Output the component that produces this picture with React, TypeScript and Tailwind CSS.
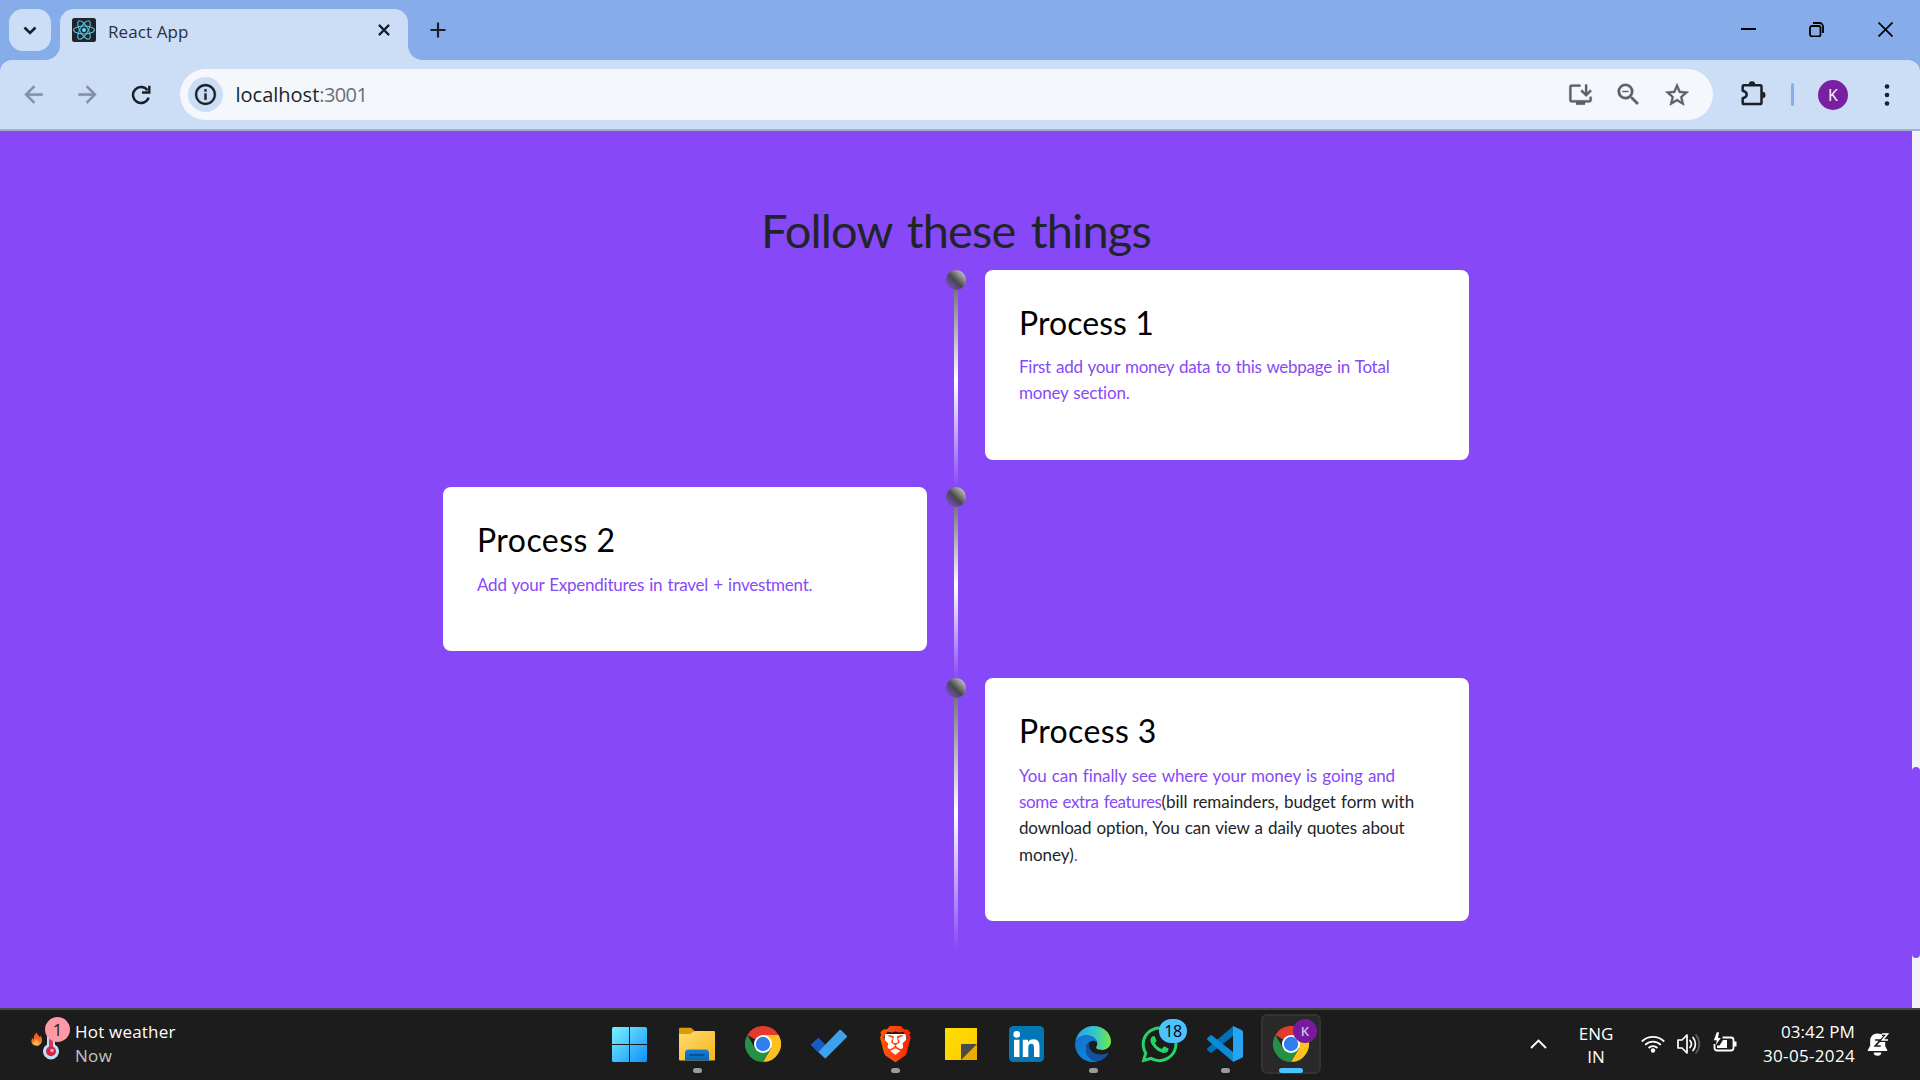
import React from 'react';
import {
  MdArrowBack,
  MdArrowForward,
  MdOutlineInfo,
  MdOutlineInstallDesktop,
  MdZoomOut,
  MdStarOutline,
} from 'react-icons/md';
import { SiBrave } from 'react-icons/si';
import { FaWhatsapp } from 'react-icons/fa';

function ReactFavicon() {
  return (
    <svg className="size-6" viewBox="0 0 24 24">
      <rect width="24" height="24" rx="2.5" fill="#20232a" />
      <g fill="none" stroke="#53c1de" strokeWidth="1.1">
        <ellipse cx="12" cy="12" rx="10.4" ry="4" />
        <ellipse cx="12" cy="12" rx="10.4" ry="4" transform="rotate(60 12 12)" />
        <ellipse cx="12" cy="12" rx="10.4" ry="4" transform="rotate(120 12 12)" />
      </g>
      <circle cx="12" cy="12" r="2" fill="#61dafb" />
    </svg>
  );
}

function TabFoot({ className }: { className: string }) {
  return (
    <svg className={className} viewBox="0 0 15 15">
      <path d="M15 0v15H0C8.500 15 15 8.500 15 0z" fill="#ccddf6" />
    </svg>
  );
}

function TabStrip() {
  return (
    <div className="flex h-[60px] items-start bg-[#86ade9]">
      <div className="mt-[9px] ml-[9px] flex size-[42px] items-center justify-center rounded-[14px] bg-[#ccddf6]">
        <svg className="size-[42px]" viewBox="0 0 42 42">
          <path d="M15.500 18.500l5.500 5.500 5.500-5.500" fill="none" stroke="#1b1f26" strokeWidth="2.600" />
        </svg>
      </div>
      <div className="relative mt-[9px] ml-[9px] flex h-[51px] w-[348px] rounded-t-[14px] bg-[#ccddf6] pl-3">
        <TabFoot className="absolute bottom-0 -left-[15px] size-[15px]" />
        <TabFoot className="absolute -right-[15px] bottom-0 size-[15px] -scale-x-100" />
        <div className="mt-[9px] size-6">
          <ReactFavicon />
        </div>
        <div className="mt-[11px] ml-3 flex-1 text-[17px] leading-6 tracking-[0.1px] text-[#2b3039]">React App</div>
        <svg className="mt-[15px] mr-[18px] size-3" viewBox="0 0 12 12">
          <path d="M.9.9l10.200 10.200M11.100.9L.9 11.100" stroke="#1b1f26" strokeWidth="2.200" />
        </svg>
      </div>
      <svg className="mt-[22px] ml-[22px] size-4" viewBox="0 0 16 16">
        <path d="M8 .5v15M.5 8h15" stroke="#1b1f26" strokeWidth="2.200" />
      </svg>
      <div className="mt-[22px] mr-[27px] ml-auto flex">
        <svg className="size-[15px]" viewBox="0 0 15 15">
          <path d="M0 7h15" stroke="#000" strokeWidth="2" />
        </svg>
        <svg className="ml-[53px] size-[15px]" viewBox="0 0 15 15">
          <rect x="1" y="4" width="10.500" height="10.500" rx="2" fill="none" stroke="#000" strokeWidth="1.800" />
          <path d="M4 1h6.500A3.500 3.500 0 0 1 14 4.500V11" fill="none" stroke="#000" strokeWidth="1.800" />
        </svg>
        <svg className="ml-[54px] size-[15px]" viewBox="0 0 15 15">
          <path d="M.5.5l14 14M14.500.5l-14 14" stroke="#000" strokeWidth="1.700" />
        </svg>
      </div>
    </div>
  );
}

function Toolbar() {
  return (
    <div className="bg-[#86ade9]">
      <div className="flex h-[71px] items-center rounded-t-[12px] border-b-2 border-[#a4b0cc] bg-[#ccddf6] [&_path[fill=none]]:stroke-[var(--line,none)]">
        <MdArrowBack className="mb-px ml-5 size-[27px] stroke-current stroke-[0.4] text-[#8390a5]" />
        <MdArrowForward className="mb-px ml-[27px] size-[27px] stroke-current stroke-[0.4] text-[#8390a5]" />
        <svg className="ml-[30px] size-5 [--line:#1b1f26]" viewBox="0 0 20 20">
          <path d="M16.500 5.200A8 8 0 1 0 17.600 12.600" fill="none" strokeWidth="2.500" />
          <path d="M18.300.8v6.700h-7.300" fill="none" strokeWidth="2.400" />
        </svg>
        <div className="ml-[29px] flex h-[51px] w-[1533px] items-center rounded-full bg-[#f4f8fd] pl-2">
          <div className="flex size-[35px] items-center justify-center rounded-full bg-[#ccddf6]">
            <MdOutlineInfo className="size-[25px] stroke-current stroke-[0.3] text-[#1b1f26]" />
          </div>
          <div className="ml-[12.5px] flex-1 text-[20px] leading-7 text-[#1b1f26]">
            <span>localhost</span>
            <span className="tracking-[-0.6px] text-[#6a6f77]">:3001</span>
          </div>
          <MdOutlineInstallDesktop className="mr-[20px] size-[27px] stroke-current stroke-[0.2] text-[#5c6066]" />
          <MdZoomOut className="mr-5 size-[29px] stroke-current stroke-[0.3] text-[#5c6066]" />
          <MdStarOutline className="mr-[22px] size-7 stroke-current stroke-[0.4] text-[#5c6066]" />
        </div>
        <svg className="mb-1 ml-[26px] size-[27px] [--line:#1b1f26]" viewBox="0 0 27 27">
          <path
            d="M5 6.300h16.200q1.300 0 1.300 1.300v16.200q0 1.300-1.300 1.300H5q-1.300 0-1.300-1.300v-4.500c3-.8 4-2.200 4-3.800s-1-3-4-3.800V7.600q0-1.300 1.300-1.300z"
            fill="none"
            strokeWidth="2.500"
            strokeLinejoin="round"
          />
          <path d="M9.800 5.500a3.200 3.200 0 0 1 6.400 0zM23.300 12.800a3.200 3.200 0 0 1 0 6.400z" fill="#1b1f26" />
        </svg>
        <div className="ml-[25px] h-[23px] w-[3px] rounded-full bg-[#86ade9]" />
        <div className="mt-px ml-6 flex size-[30px] items-center justify-center rounded-full bg-[#7b1fa2] text-[16px] leading-none text-white">
          K
        </div>
        <svg className="ml-9 h-6 w-[6px]" viewBox="0 0 6 24">
          <circle cx="3" cy="3.500" r="2.300" fill="#1b1f26" />
          <circle cx="3" cy="12" r="2.300" fill="#1b1f26" />
          <circle cx="3" cy="20.500" r="2.300" fill="#1b1f26" />
        </svg>
      </div>
    </div>
  );
}

function Marker() {
  return (
    <div className="flex flex-col items-center self-stretch">
      <div className="size-5 rounded-full bg-[linear-gradient(45deg,#8050e4_5%,#484848_47%,#c4c4c4_88%)]" />
      <div className="w-1 flex-1 bg-[linear-gradient(to_bottom,#787878,#ffffff_46%,#8749f700)]" />
    </div>
  );
}

function Card({ title, titleClass, className, children }: {
  title: string;
  titleClass: string;
  className: string;
  children: React.ReactNode;
}) {
  return (
    <div className={`w-[484px] rounded-[8px] bg-white pt-[34px] pl-[34px] ${className}`}>
      <h2 className={`text-[32px] leading-[38px] text-black ${titleClass}`}>{title}</h2>
      <div className="text-[17px] leading-[26.3px] whitespace-nowrap text-[#8749f7] [word-spacing:1px]">
        {children}
      </div>
    </div>
  );
}

function Page() {
  return (
    <div className="flex h-[877px] bg-[#8749f7] font-[Lato,sans-serif]">
      <main className="flex flex-1 flex-col items-center">
        <h1 className="mt-[71px] h-14 text-[47px] leading-[56px] tracking-[-0.86px] text-[#212529] [word-spacing:4px]">
          Follow these things
        </h1>
        <div className="mt-3 w-[1026px]">
          <div className="grid h-[217px] grid-cols-[484px_58px_484px] items-start">
            <div />
            <Marker />
            <Card title="Process 1" titleClass="mb-3 tracking-[0.05px]" className="h-[190px]">
              <p className="tracking-[-0.26px]">First add your money data to this webpage in Total</p>
              <p className="tracking-[-0.2px]">money section.</p>
            </Card>
          </div>
          <div className="grid h-[191px] grid-cols-[484px_58px_484px] items-start">
            <Card title="Process 2" titleClass="mb-[12.8px] tracking-[0.45px]" className="h-[164px]">
              <p className="tracking-[-0.22px]">Add your Expenditures in travel + investment.</p>
            </Card>
            <Marker />
          </div>
          <div className="grid h-[270px] grid-cols-[484px_58px_484px] items-start">
            <div />
            <Marker />
            <Card title="Process 3" titleClass="mb-[12.8px] tracking-[0.35px]" className="h-[243px]">
              <p className="tracking-[-0.1px]">You can finally see where your money is going and</p>
              <p>
                <span className="tracking-[-0.36px]">some extra features</span>
                <span className="tracking-[-0.06px] text-[#212529]">(bill remainders, budget form with</span>
              </p>
              <p className="tracking-[-0.15px] text-[#212529]">download option, You can view a daily quotes about</p>
              <p>
                <span className="text-[#212529]">money)</span>.
              </p>
            </Card>
          </div>
        </div>
      </main>
      <div className="w-2 bg-[#f1f3f8] pt-[636px]">
        <div className="h-[191px] rounded-full bg-[#8749f7]" />
      </div>
    </div>
  );
}

function ChromeLogo() {
  return (
    <svg className="size-9" viewBox="0 0 36 36">
      <path d="M18 18L2.400 9A18 18 0 0 1 33.600 9z" fill="#e33b2e" />
      <path d="M18 9h15.600A18 18 0 0 1 18 36l7.800-13.500z" fill="#fcc021" />
      <path d="M2.400 9A18 18 0 0 0 18 36l7.800-13.500L18 18l-7.800 4.500z" fill="#249144" />
      <circle cx="18" cy="18" r="9" fill="#fff" />
      <circle cx="18" cy="18" r="7.200" fill="#2f7def" />
    </svg>
  );
}

function WindowsLogo() {
  return (
    <svg className="size-[35px]" viewBox="0 0 35 35">
      <defs>
        <linearGradient id="win" x1="0" y1="0" x2="35" y2="35" gradientUnits="userSpaceOnUse">
          <stop stopColor="#7cf2fd" />
          <stop offset="1" stopColor="#0d90fa" />
        </linearGradient>
      </defs>
      <path
        d="M1.500 0H17v17H0V1.500Q0 0 1.500 0zM18 0h15.500Q35 0 35 1.500V17H18zM0 18h17v17H1.500Q0 35 0 33.500zM18 18h17v15.500q0 1.500-1.500 1.500H18z"
        fill="url(#win)"
      />
    </svg>
  );
}

function FolderIcon() {
  return (
    <svg className="size-9" viewBox="0 0 36 36">
      <defs>
        <linearGradient id="fold" x1="0" y1="0" x2="1" y2="1">
          <stop stopColor="#ffdb70" />
          <stop offset="1" stopColor="#f8b61c" />
        </linearGradient>
        <linearGradient id="foldBlue" x1="0" y1="0" x2="0" y2="1">
          <stop stopColor="#1283d6" />
          <stop offset="1" stopColor="#0864b4" />
        </linearGradient>
      </defs>
      <path d="M0 3q0-1.300 1.300-1.300H12l3.500 3.200L12 10H0z" fill="#dd9c05" />
      <path d="M0 8h11l4.500-3H35q1 0 1 1v27.500q0 1-1 1H1q-1 0-1-1z" fill="url(#fold)" />
      <path d="M6 34.500V27q0-3.500 3.500-3.500h17Q30 23.500 30 27v7.500z" fill="url(#foldBlue)" />
      <path d="M11 28.800h14" stroke="#0a4c8c" strokeWidth="1.800" strokeLinecap="round" />
    </svg>
  );
}

function TodoIcon() {
  return (
    <svg className="size-9" viewBox="0 0 36 36">
      <path d="M7.500 11.700l7 7L7.200 26.500.5 19.700q-1-1 0-2z" fill="#185abd" />
      <path d="M28.200 4.300q1-1 2 0l5.300 5.200q1 1 0 2L15.200 31.800q-1 1-2 0l-6-5.800z" fill="#3fa0ec" />
    </svg>
  );
}

function BraveIcon() {
  return (
    <svg className="h-9 w-[31px]" viewBox="0 0 31 36">
      <defs>
        <linearGradient id="brave" x1="0" y1="0" x2="24" y2="0" gradientUnits="userSpaceOnUse">
          <stop offset=".1" stopColor="#ff5500" />
          <stop offset=".5" stopColor="#ff4410" />
          <stop offset=".9" stopColor="#ff2000" />
        </linearGradient>
      </defs>
      <path d="M5 8h21l1 14-11.500 9L4 22z" fill="#fff" />
      <g transform="translate(-2.600 0)">
        <SiBrave size={36} fill="url(#brave)" />
      </g>
    </svg>
  );
}

function StickyIcon() {
  return (
    <svg className="size-9" viewBox="0 0 36 36">
      <defs>
        <linearGradient id="stick" x1="0" y1="0" x2="1" y2="1">
          <stop stopColor="#ffe000" />
          <stop offset="1" stopColor="#fcc800" />
        </linearGradient>
      </defs>
      <path d="M3 2h31v32H2V3q0-1 1-1z" fill="url(#stick)" />
      <path d="M18 34V19q0-1 1-1h15v16z" fill="#4a4a4a" />
      <path d="M18 34L34 18v16z" fill="#edaa00" />
    </svg>
  );
}

function LinkedInIcon() {
  return (
    <svg className="size-9" viewBox="0 0 36 36">
      <rect width="35" height="36" rx="4.500" fill="#0277b5" />
      <circle cx="7.700" cy="8.400" r="3.300" fill="#fff" />
      <path
        d="M5 13.700h5.500V31H5zM13.800 13.700H19v2.400c1-1.700 2.900-2.800 5.300-2.800 5 0 6.200 3.100 6.200 7.700v10H25v-9c0-2.400-.3-4.300-2.700-4.300-2.500 0-3 1.900-3 4.200V31h-5.500z"
        fill="#fff"
      />
    </svg>
  );
}

function EdgeIcon() {
  return (
    <svg className="size-9" viewBox="0 0 36 36">
      <defs>
        <linearGradient id="edgeTop" x1="0" y1="12" x2="36" y2="14" gradientUnits="userSpaceOnUse">
          <stop stopColor="#289fe6" />
          <stop offset=".5" stopColor="#30c3d4" />
          <stop offset="1" stopColor="#72e945" />
        </linearGradient>
        <linearGradient id="edgeLeft" x1="4" y1="12" x2="18" y2="36" gradientUnits="userSpaceOnUse">
          <stop stopColor="#1376cc" />
          <stop offset="1" stopColor="#0d86e0" />
        </linearGradient>
      </defs>
      <path
        d="M.2 16.500C1.500 7 9 0 18.200 0 29 0 36 7.700 36 15.300c0 5.300-4 8.700-8.600 8.700-4 0-6.400-1.200-6.400-2.400 0-.8 1.300-1.500 1.300-4.200C22.300 13 17 9.500 11.300 9.500 5 9.500 1 13.500.2 16.500z"
        fill="url(#edgeTop)"
      />
      <path
        d="M0 18C.5 13 5 9.300 10.800 9.300c6.200 0 11.500 3.200 11.500 7.700-1-1.600-2.600-2.200-4.300-2.200C14.500 14.800 11 18.500 11 23c0 6.500 5 12 11.500 12.500-1.500.4-3 .5-4.500.5C8 36 0 28 0 18z"
        fill="url(#edgeLeft)"
      />
      <path
        d="M14.800 16.500c-4 3-5 8.500-2.500 13 2.500 4.500 7 6.500 10.700 5.800 4.500-1 8-3.800 10.200-7.300.5-.8-.1-1.300-.8-1-7.500 3.600-17.900.3-18.400-7 0-1.300.3-2.500.8-3.500z"
        fill="#1253a0"
      />
    </svg>
  );
}

function CodeIcon() {
  return (
    <svg className="size-9" viewBox="0 0 36 36">
      <path d="M26 .3v9.700L5 26.500q-1 .6-1.800 0L.5 24q-.9-1 0-1.900z" fill="#0070b8" />
      <path d="M26 35.700V26L5 9.500q-1-.6-1.800 0L.5 12q-.9 1 0 1.900z" fill="#0c8ad6" />
      <path d="M26 0l9 4.200q1 .5 1 1.600v24.400q0 1.100-1 1.600L26 36z" fill="#25a4f2" />
    </svg>
  );
}

function Slot({ mark, children }: { mark?: boolean; children: React.ReactNode }) {
  return (
    <div className="flex w-[66px] flex-col items-center pt-4">
      <div className="relative flex h-9 w-9 items-center justify-center">{children}</div>
      {mark && <div className="mt-[6px] h-[5px] w-[9px] rounded-full bg-[#9b9b9b]" />}
    </div>
  );
}

function Taskbar() {
  return (
    <div className="flex h-[72px] border-t-2 border-[#454545] bg-[#1c1c1c] text-[17px] leading-6 text-white">
      <div className="flex w-[596px] pl-[31px]">
        <div className="relative w-[44px]">
          <svg className="mt-[18px] h-8 w-[30px]" viewBox="0 0 30 32">
            <defs>
              <linearGradient id="fire" x1="0" y1="0" x2="0" y2="1">
                <stop stopColor="#e8462c" />
                <stop offset=".6" stopColor="#f4722b" />
                <stop offset="1" stopColor="#ffb13d" />
              </linearGradient>
            </defs>
            <path d="M5.500 4.500c1 2 2.500 2.500 3 4.500.8-.3.900-1 .9-1.600 3 3.600 1.800 10.400-4.200 10.400C.3 17.800-.7 13 1.500 10c.3.8.6 1.200 1.300 1.400C2.600 8.500 3.300 6 5.500 4.500z" fill="url(#fire)" />
            <path d="M5.300 11c1 1.500 2.600 2.400 2.300 4.300-.5 2.400-4.200 2.400-4.600 0-.2-1.800 1.600-2.400 2.300-4.300z" fill="#ffb84a" />
            <path d="M16 0h8v16.500a8 8 0 1 1-8 0z" fill="#bfe0f7" />
            <path d="M18 5h4v14h-4z" fill="#d93a52" />
            <circle cx="20" cy="23.300" r="5" fill="#d3264a" />
            <circle cx="21" cy="22.500" r="1.800" fill="#f6a5b4" />
          </svg>
          <div className="absolute top-[7px] left-[14px] flex size-[25px] items-center justify-center rounded-full bg-[#ff99a4] text-[17px] leading-none text-[#1c1c1c]">
            1
          </div>
        </div>
        <div className="mt-[10px]">
          <div className="tracking-[0.2px]">Hot weather</div>
          <div className="tracking-[0.3px] text-[#c4c4c4]">Now</div>
        </div>
      </div>
      <Slot><WindowsLogo /></Slot>
      <div className="ml-[2px] flex">
        <Slot mark><FolderIcon /></Slot>
        <Slot><ChromeLogo /></Slot>
        <Slot><TodoIcon /></Slot>
        <Slot mark><BraveIcon /></Slot>
        <Slot><StickyIcon /></Slot>
        <Slot><LinkedInIcon /></Slot>
        <Slot mark><EdgeIcon /></Slot>
        <Slot>
          <FaWhatsapp className="size-[41px] shrink-0 text-[#25d366]" />
          <div className="absolute -top-[7px] left-[18px] flex h-6 w-7 items-center justify-center rounded-full bg-[#4cc2ff] text-[16px] leading-none tracking-[-0.5px] text-black">
            18
          </div>
        </Slot>
        <Slot mark><CodeIcon /></Slot>
      </div>
      <div className="mx-[3px] mt-1 flex h-[60px] w-[60px] flex-col items-center rounded-[6px] border-2 border-[#333333] bg-[#292929] pt-[10px]">
        <div className="relative size-9">
          <ChromeLogo />
          <div className="absolute -top-[7px] left-[20px] flex size-6 items-center justify-center rounded-full bg-[#771a9e] text-[13px] leading-none font-semibold text-[#d9b8e6]">
            K
          </div>
        </div>
        <div className="mt-[6px] h-[5px] w-6 shrink-0 rounded-full bg-[#4cc2ff]" />
      </div>
      <div className="mr-[31px] ml-auto flex">
        <svg className="mt-[29px] h-[10px] w-[17px]" viewBox="0 0 17 10">
          <path d="M1 9l7.500-7.500L16 9" fill="none" stroke="#fff" strokeWidth="1.900" />
        </svg>
        <div className="mt-3 ml-[31px] w-[36px] text-center leading-[23px]">
          ENG
          <br />
          IN
        </div>
        <svg className="mt-6 ml-[27px] h-[19px] w-6" viewBox="0 0 24 19">
          <g fill="none" stroke="#fff" strokeWidth="1.800">
            <path d="M.8 7.500a15.800 15.800 0 0 1 22.400 0" />
            <path d="M4.200 10.800a11 11 0 0 1 15.600 0" />
            <path d="M7.600 14a6.200 6.200 0 0 1 8.800 0" />
          </g>
          <circle cx="12" cy="16.500" r="2.200" fill="#fff" />
        </svg>
        <svg className="mt-[23px] ml-3 h-[22px] w-6" viewBox="0 0 24 22">
          <path d="M1 7h4l5-5v18l-5-5H1z" fill="none" stroke="#fff" strokeWidth="1.700" strokeLinejoin="round" />
          <path d="M13 7.500a5.500 5.500 0 0 1 0 7M16 4.500a10 10 0 0 1 0 13" fill="none" stroke="#fff" strokeWidth="1.700" strokeLinecap="round" />
          <path d="M19 2a14 14 0 0 1 0 18" fill="none" stroke="#5e5e5e" strokeWidth="1.700" strokeLinecap="round" />
        </svg>
        <svg className="mt-[22px] ml-3 h-5 w-6" viewBox="0 0 24 20">
          <path d="M9.500 5.500H18a2.500 2.500 0 0 1 2.500 2.500v8a2.500 2.500 0 0 1-2.500 2.500H4A2.500 2.500 0 0 1 1.500 16v-4" fill="none" stroke="#fff" strokeWidth="1.800" />
          <path d="M21 9.500h2.500v5H21z" fill="#fff" />
          <path d="M10 8h4v8H4v-2.500h2.500z" fill="#fff" />
          <path d="M3.800.3L.8 8.300h3L2.800 13 7.800 6H5L6 .3z" fill="#fff" />
        </svg>
        <div className="mt-[10px] ml-[25px] w-[93px] text-right">
          <div className="tracking-[0.1px]">03:42 PM</div>
          <div className="tracking-[0.33px]">30-05-2024</div>
        </div>
        <svg className="mt-[22px] ml-3 h-6 w-[22px]" viewBox="0 0 22 24">
          <path d="M10.500 1.500C5.800 1.500 3.200 5 3.200 8.500v5.300L.8 18v1h19.400v-1l-2-4V8.500c0-3.500-2.700-7-7.700-7z" fill="#fff" />
          <path d="M6.700 20.500h7.600a3.800 3.200 0 0 1-7.600 0z" fill="#fff" />
          <path d="M8 8h5.500L8.300 14h5.500" fill="none" stroke="#1c1c1c" strokeWidth="1.700" />
          <path d="M15 2h5.500l-5 6h5.500" fill="none" stroke="#1c1c1c" strokeWidth="4" />
          <path d="M15 2h5.500l-5 6h5.500" fill="none" stroke="#fff" strokeWidth="1.600" />
        </svg>
      </div>
    </div>
  );
}

export default function App() {
  return (
    <div className="h-[1080px] w-[1920px] overflow-hidden font-['Open_Sans',sans-serif]">
      <TabStrip />
      <Toolbar />
      <Page />
      <Taskbar />
    </div>
  );
}
